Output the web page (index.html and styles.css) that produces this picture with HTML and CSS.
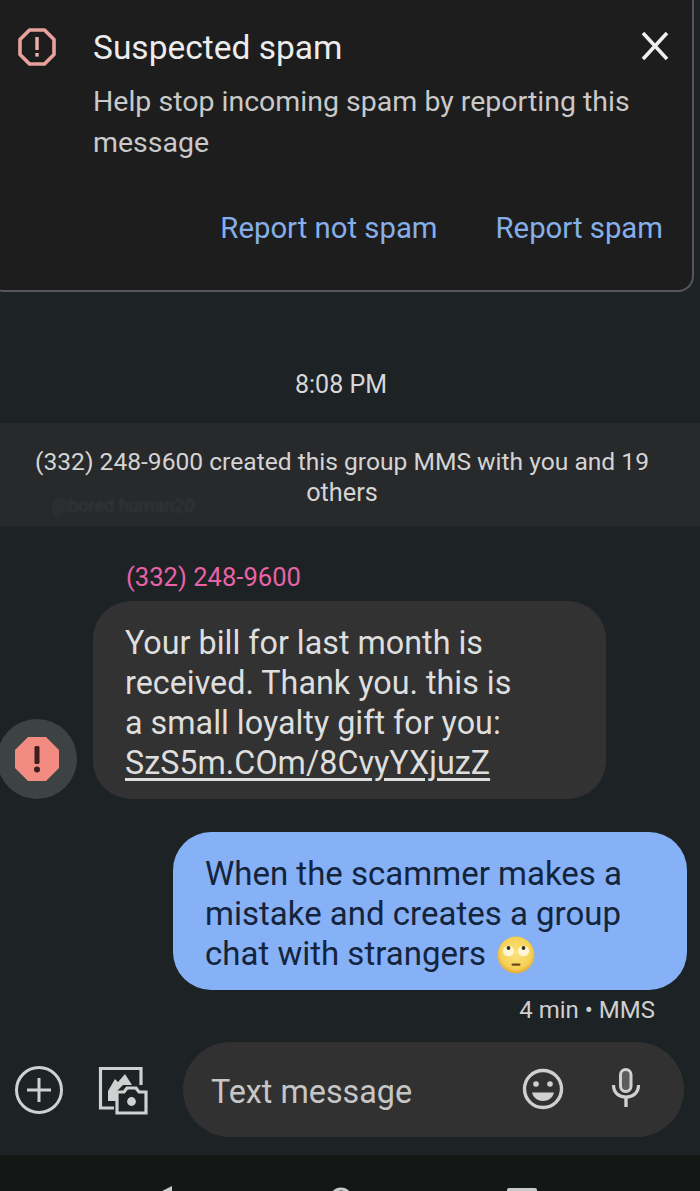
FILE: index.html
```html
<!DOCTYPE html>
<html lang="en">
<head>
    <meta charset="UTF-8">
    <meta name="viewport" content="width=device-width, initial-scale=1.0">
    <title>Messages</title>
    <link rel="stylesheet" href="styles.css">
</head>
<body>
    <section class="spam-card">
        <svg class="spam-icon" viewBox="0 0 40 40" width="40" height="40">
            <polygon points="12.5,3 27.5,3 37,12.5 37,27.5 27.5,37 12.5,37 3,27.5 3,12.5" fill="none" stroke="#e8a19c" stroke-width="3.6" stroke-linejoin="round"/>
            <rect x="18.3" y="10" width="3.4" height="13" fill="#eeb0ab"/>
            <rect x="18.3" y="26" width="3.4" height="3.6" fill="#eeb0ab"/>
        </svg>
        <div class="spam-body">
            <h3 class="spam-title">Suspected spam</h3>
            <p class="spam-text">Help stop incoming spam by reporting this message</p>
            <div class="spam-actions">
                <span>Report not spam</span>
                <span>Report spam</span>
            </div>
        </div>
        <svg class="close-icon" viewBox="0 0 30 30" width="30" height="30">
            <path d="M3 2 L27 28 M27 2 L3 28" stroke="#f0f0f0" stroke-width="3.6" fill="none"/>
        </svg>
    </section>

    <div class="time">8:08 PM</div>

    <div class="group-notice">
        <span class="notice-line">(332) 248-9600 created this group MMS with you and 19</span>
        <span class="notice-line">others</span>
        <span class="watermark">@bored.human20</span>
    </div>

    <div class="sender">(332) 248-9600</div>
    <div class="row-in">
        <div class="error-badge">
            <svg viewBox="0 0 46 46" width="46" height="46">
                <polygon points="14,1 32,1 45,14 45,32 32,45 14,45 1,32 1,14" fill="#f28b82"/>
                <rect x="20.5" y="10" width="5" height="18" rx="1.5" fill="#3c1f1c"/>
                <circle cx="23" cy="33.5" r="3" fill="#3c1f1c"/>
            </svg>
        </div>
        <div class="bubble bubble-in">
            Your bill for last month is<br>
            received. Thank you. this is<br>
            a small loyalty gift for you:<br>
            <u>SzS5m.COm/8CvyYXjuzZ</u>
        </div>
    </div>

    <div class="row-out">
        <div class="bubble bubble-out">
            When the scammer makes a<br>
            mistake and creates a group<br>
            chat with strangers
            <svg class="emoji" viewBox="0 0 38 38" width="38" height="38">
                <defs>
                    <radialGradient id="emoji-face" cx="50%" cy="45%" r="55%">
                        <stop offset="0%" stop-color="#fbe27a"/>
                        <stop offset="75%" stop-color="#f6d257"/>
                        <stop offset="100%" stop-color="#e2a93a"/>
                    </radialGradient>
                </defs>
                <circle cx="19" cy="19" r="18.5" fill="url(#emoji-face)"/>
                <ellipse cx="11.5" cy="15" rx="5.6" ry="5.2" fill="#fff6d8"/>
                <ellipse cx="26.5" cy="15" rx="5.6" ry="5.2" fill="#fff6d8"/>
                <circle cx="11.5" cy="12" r="1.9" fill="#3a2f1c"/>
                <circle cx="26.5" cy="12" r="1.9" fill="#3a2f1c"/>
                <rect x="14.5" y="27.5" width="9" height="2.2" rx="1.1" fill="#6b4a1e"/>
            </svg>
        </div>
    </div>
    <div class="meta">4 min • MMS</div>

    <div class="composer">
        <svg class="tool" viewBox="0 0 50 50" width="50" height="50">
            <circle cx="25" cy="25" r="22.5" fill="none" stroke="#cfd1d1" stroke-width="3"/>
            <path d="M25 13 V37 M13 25 H37" stroke="#cfd1d1" stroke-width="3" fill="none"/>
        </svg>
        <svg class="tool" viewBox="0 0 50 50" width="50" height="50">
            <path d="M16 43 H2.5 V3.5 H43 V20" fill="none" stroke="#cfd1d1" stroke-width="3.2"/>
            <path d="M10 36 V26 L17 14 L20 17 L27 9 L34 20 H25 L18 27 V36 Z" fill="#cfd1d1"/>
            <path d="M19 27 H26 L29 23 H38 L41 27 H48 V48 H19 Z" fill="#1d2225" stroke="#cfd1d1" stroke-width="3.2"/>
            <circle cx="33.5" cy="36.5" r="4.4" fill="#cfd1d1"/>
        </svg>
        <div class="input-pill">
            <span class="placeholder">Text message</span>
            <svg class="pill-smile" viewBox="0 0 42 42" width="42" height="42">
                <circle cx="21" cy="21" r="18.5" fill="none" stroke="#cfd1d1" stroke-width="3.4"/>
                <circle cx="14" cy="16" r="2.8" fill="#cfd1d1"/>
                <circle cx="28" cy="16" r="2.8" fill="#cfd1d1"/>
                <path d="M10 24.5 H32 C31 29.5 26 33 21 33 C16 33 11 29.5 10 24.5 Z" fill="#cfd1d1"/>
            </svg>
            <svg class="pill-mic" viewBox="0 0 30 42" width="30" height="42">
                <rect x="9.5" y="2.5" width="10.5" height="22" rx="5.2" fill="#5c5c5c" stroke="#cfd1d1" stroke-width="3"/>
                <path d="M2.5 18 C2.5 26 8 30 15 30 C22 30 27.5 26 27.5 18" fill="none" stroke="#cfd1d1" stroke-width="3.2"/>
                <path d="M15 30 V40" stroke="#cfd1d1" stroke-width="3.4"/>
            </svg>
        </div>
    </div>

    <nav class="nav-bar">
        <svg viewBox="0 0 700 36" width="700" height="36">
            <polygon points="172,31 162,36 172,36" fill="#c9c9c9"/>
            <circle cx="341" cy="44" r="10" fill="none" stroke="#c9c9c9" stroke-width="3"/>
            <rect x="507" y="33" width="30" height="10" rx="2" fill="#c9c9c9"/>
        </svg>
    </nav>
</body>
</html>
```

FILE: styles.css
```css
* {
    box-sizing: border-box;
}
html, body {
    height: 100%;
}
body {
    margin: 0;
    height: 1191px;
    overflow: hidden;
    background: #1d2225;
    font-family: Roboto, "Liberation Sans", sans-serif;
    color: #d8d8d8;
}
.spam-card {
    display: flex;
    align-items: flex-start;
    width: 706px;
    height: 292px;
    margin-left: -12px;
    padding: 29px 24px 0 27px;
    background: #1d1d1d;
    border: 2px solid #55585a;
    border-top: none;
    border-radius: 0 0 16px 16px;
}
.spam-icon {
    flex: none;
    margin: -2px 36px 0 0;
}
.spam-body {
    flex: 1;
    min-width: 0;
}
.spam-title {
    margin: 0;
    font-size: 33.5px;
    font-weight: 400;
    line-height: 38px;
    color: #ececec;
}
.spam-text {
    margin: 14px 0 0;
    width: 560px;
    font-size: 28.5px;
    line-height: 41px;
    color: #c9c9c9;
}
.spam-actions {
    display: flex;
    justify-content: flex-end;
    gap: 58px;
    margin-top: 47px;
    margin-right: -23px;
    font-size: 29.3px;
    line-height: 36px;
    color: #86aee8;
}
.close-icon {
    flex: none;
    margin: 2px -2px 0 0;
}
.time {
    margin-top: 77px;
    text-align: center;
    font-size: 25px;
    line-height: 32px;
    color: #d8d8d8;
    padding-right: 18px;
}
.group-notice {
    position: relative;
    height: 103px;
    margin-top: 22px;
    padding-top: 23px;
    background: #27292a;
    font-size: 24.6px;
    line-height: 31px;
    color: #d4d4d4;
}
.notice-line {
    display: block;
    width: fit-content;
    margin: 0 auto;
    position: relative;
    left: -8px;
}
.notice-line + .notice-line {
    font-size: 25.3px;
}
.watermark {
    position: absolute;
    left: 52px;
    top: 72px;
    font-size: 18px;
    line-height: 22px;
    color: #37393a;
    filter: blur(1px);
}
.sender {
    margin: 35px 0 0 126px;
    font-size: 25.6px;
    line-height: 32px;
    color: #e862a8;
}
.row-in {
    display: flex;
    align-items: flex-end;
    margin-top: 8px;
}
.error-badge {
    display: flex;
    align-items: center;
    justify-content: center;
    flex: none;
    width: 80px;
    height: 80px;
    margin-left: -3px;
    border-radius: 50%;
    background: #3d4243;
}
.bubble {
    font-size: 33px;
    line-height: 40px;
}
.bubble-in {
    width: 513px;
    height: 198px;
    margin-left: 16px;
    padding: 22px 32px 0;
    border-radius: 38px;
    background: #323232;
    font-size: 32.3px;
    color: #dedede;
}
.bubble-in u {
    text-underline-offset: 4px;
}
.row-out {
    display: flex;
    justify-content: flex-end;
    margin-top: 33px;
    padding-right: 13px;
}
.bubble-out {
    width: 514px;
    height: 158px;
    padding: 22px 32px 0;
    border-radius: 38px;
    background: #86b1f7;
    color: #14243c;
}
.emoji {
    vertical-align: -9px;
    margin-left: 3px;
}
.meta {
    margin-top: 5px;
    padding-right: 45px;
    text-align: right;
    font-size: 24px;
    line-height: 30px;
    color: #cfcfcf;
}
.composer {
    display: flex;
    align-items: center;
    height: 95px;
    margin-top: 17px;
    padding: 0 16px 0 14px;
}
.tool {
    flex: none;
    margin-right: 34px;
}
.tool + .tool {
    margin-right: 35px;
}
.input-pill {
    display: flex;
    align-items: center;
    flex: 1;
    height: 95px;
    padding: 0 43px 0 28px;
    border-radius: 48px;
    background: #313131;
}
.placeholder {
    flex: 1;
    padding-top: 4px;
    font-size: 32.3px;
    color: #c6c6c6;
}
.pill-smile {
    flex: none;
    margin-top: -2px;
}
.pill-mic {
    flex: none;
    margin: -4px 0 0 47px;
}
.nav-bar {
    height: 36px;
    margin-top: 18px;
    background: #131716;
}
.nav-bar svg {
    display: block;
}
```
